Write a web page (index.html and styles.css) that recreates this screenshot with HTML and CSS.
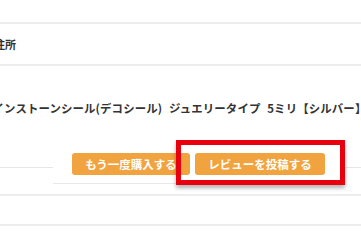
FILE: index.html
```html
<!DOCTYPE html>
<html lang="ja">
<head>
<meta charset="utf-8">
<link rel="stylesheet" href="styles.css">
</head>
<body>
<div class="page">
  <div class="row top"></div>
  <div class="row addr"><span class="label">住所</span></div>
  <div class="title">ラインストーンシール(デコシール) ジュエリータイプ 5ミリ【シルバー】</div>
  <div class="actions">
    <div class="btnbox">
      <span class="btn btn-rebuy">もう一度購入する</span>
      <span class="btn btn-review">レビューを投稿する</span>
    </div>
    <div class="highlight"></div>
  </div>
  <div class="row r1"></div>
  <div class="row r2"></div>
</div>
</body>
</html>
```
FILE: styles.css
```css
html, body {
  margin: 0;
  padding: 0;
  background: #fff;
}
body {
  width: 361px;
  height: 240px;
  overflow: hidden;
  font-family: "Noto Sans CJK JP", "Noto Sans", sans-serif;
  color: #333;
}
.page {
  width: 361px;
}
.row {
  border-bottom: 2px solid #ededed;
  box-sizing: border-box;
}
.top {
  height: 24px;
}
.addr {
  height: 42px;
  display: flex;
  align-items: center;
}
.label {
  margin-left: -6px;
  font-size: 11px;
  font-weight: bold;
}
.title {
  margin-top: 34px;
  margin-left: -19px;
  white-space: nowrap;
  font-size: 11.4px;
  line-height: 16px;
  font-weight: bold;
  word-spacing: 4px;
  letter-spacing: 0.15px;
}
.actions {
  position: relative;
  height: 52px;
  box-sizing: border-box;
  border-bottom: 1px solid #e6e6e6;
}
.btnbox {
  position: absolute;
  left: 53px;
  top: 29px;
  width: 292px;
  height: 38px;
  background: #fff;
  box-shadow: 0 1px 0 #e8e8e8;
  display: flex;
  align-items: center;
  gap: 5px;
  padding-left: 19px;
  box-sizing: border-box;
}
.btn {
  height: 22px;
  border-radius: 3px;
  background: #f0a33e;
  color: #fff;
  font-size: 11.5px;
  font-weight: bold;
  display: flex;
  align-items: center;
  justify-content: center;
}
.btn-rebuy {
  width: 118px;
}
.btn-review {
  width: 130px;
}
.highlight {
  position: absolute;
  left: 176px;
  top: 24px;
  width: 169px;
  height: 45px;
  box-sizing: border-box;
  border: 5px solid #e8000e;
  box-shadow: 0 3px 4px rgba(0, 0, 0, 0.3);
}
.r1 {
  height: 28px;
}
.r2 {
  height: 30px;
}
```
